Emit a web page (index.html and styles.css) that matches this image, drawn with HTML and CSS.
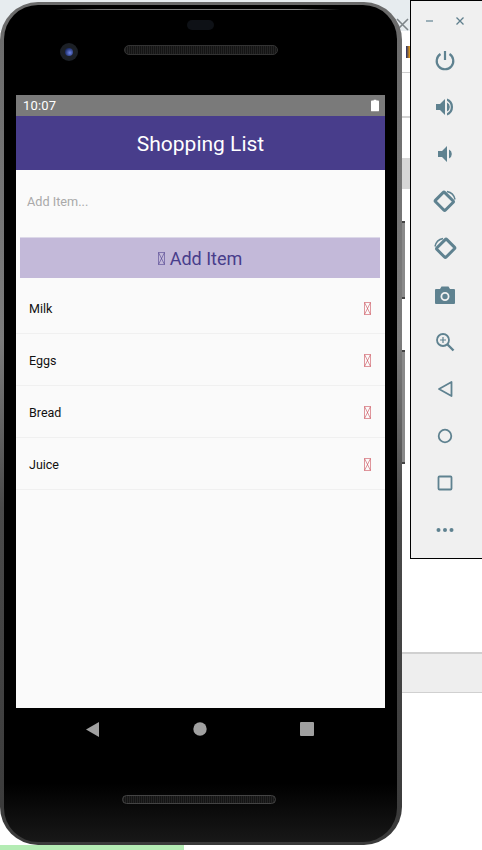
FILE: index.html
```html
<!DOCTYPE html>
<html lang="en">
<head>
<meta charset="utf-8">
<title>Shopping List</title>
<link rel="stylesheet" href="styles.css">
</head>
<body>
<div class="desk">
  <div class="bg-top"></div>
  <div class="bg-line1"></div>
  <div class="bg-line2"></div>
  <div class="bg-grey"></div>
  <div class="bg-band"></div>
  <div class="bg-green"></div>
  <svg class="bg-x" width="14" height="14" viewBox="0 0 14 14"><path d="M1 1l11 11M12 1L1 12" stroke="#7d8488" stroke-width="1.6" fill="none"/></svg>
  <div class="bg-v"></div>

  <div class="side-btn side-btn-1"></div>
  <div class="side-btn side-btn-2"></div>

  <div class="phone">
    <div class="phone-inner"></div>
    <div class="top-glare"></div>
    <div class="sensor"></div>
    <div class="camera"><div class="lens"></div></div>
    <div class="speaker speaker-top"></div>
    <div class="speaker speaker-bottom"></div>

    <main class="screen">
      <div class="status">
        <span class="time">10:07</span>
        <svg class="battery" width="8" height="13" viewBox="0 0 9 13"><path d="M3 0h3v1h2a1 1 0 0 1 1 1v10a1 1 0 0 1-1 1H1a1 1 0 0 1-1-1V2a1 1 0 0 1 1-1h2z" fill="#fff"/></svg>
      </div>
      <header class="appbar">Shopping List</header>
      <div class="input-row"><span class="placeholder">Add Item...</span></div>
      <button class="add-btn">
        <svg class="tofu" width="7" height="13" viewBox="0 0 7 13"><path d="M.5.5h6v12h-6zM.5.5l6 12M6.5.5l-6 12" fill="none" stroke="#483d8b" stroke-width="1" opacity=".55"/></svg>
        <span>Add Item</span>
      </button>
      <ul class="list">
        <li class="row"><span>Milk</span><svg class="tofu-red" width="7" height="13" viewBox="0 0 7 13"><path d="M.5.5h6v12h-6zM.5.5l6 12M6.5.5l-6 12" fill="none" stroke="#c9444f" stroke-width="1" opacity=".55"/></svg></li>
        <li class="row"><span>Eggs</span><svg class="tofu-red" width="7" height="13" viewBox="0 0 7 13"><path d="M.5.5h6v12h-6zM.5.5l6 12M6.5.5l-6 12" fill="none" stroke="#c9444f" stroke-width="1" opacity=".55"/></svg></li>
        <li class="row"><span>Bread</span><svg class="tofu-red" width="7" height="13" viewBox="0 0 7 13"><path d="M.5.5h6v12h-6zM.5.5l6 12M6.5.5l-6 12" fill="none" stroke="#c9444f" stroke-width="1" opacity=".55"/></svg></li>
        <li class="row"><span>Juice</span><svg class="tofu-red" width="7" height="13" viewBox="0 0 7 13"><path d="M.5.5h6v12h-6zM.5.5l6 12M6.5.5l-6 12" fill="none" stroke="#c9444f" stroke-width="1" opacity=".55"/></svg></li>
      </ul>
    </main>

    <nav class="softkeys">
      <svg width="14" height="16" viewBox="0 0 14 16"><path d="M0 8.500L13 1v15z" fill="#a0a0a0"/></svg>
      <svg width="14" height="14" viewBox="0 0 14 14"><circle cx="7" cy="7" r="6.700" fill="#a0a0a0"/></svg>
      <svg width="14" height="14" viewBox="0 0 14 14"><rect width="14" height="14" rx="1" fill="#a0a0a0"/></svg>
    </nav>
  </div>

  <aside class="panel">
    <div class="win-ctrls">
      <svg width="10" height="10" viewBox="0 0 10 10"><path d="M1 5h7" stroke="#7f9aa6" stroke-width="1.500"/></svg>
      <svg width="10" height="10" viewBox="0 0 10 10"><path d="M1.500 1.500l7 7M8.500 1.500l-7 7" stroke="#5f7f8d" stroke-width="1.300"/></svg>
    </div>
    <div class="tools">
      <svg width="24" height="24" viewBox="0 0 24 24"><path d="M12 3v9" stroke="#5f8290" stroke-width="2.200" fill="none"/><path d="M7.500 6a8.300 8.300 0 1 0 9 0" stroke="#5f8290" stroke-width="2.200" fill="none"/></svg>
      <svg width="24" height="24" viewBox="0 0 24 24"><path d="M3 9v6h4l5 5V4L7 9zM14 7.500v9a5 5 0 0 0 0-9zM14 3.500v2.300a7 7 0 0 1 0 12.400v2.300a9 9 0 0 0 0-17z" fill="#5f8290"/></svg>
      <svg width="24" height="24" viewBox="0 0 24 24"><path d="M5 9v6h4l5 5V4L9 9zM16 7.500v9a5 5 0 0 0 0-9z" fill="#5f8290"/></svg>
      <svg width="24" height="24" viewBox="0 0 24 24"><g fill="none" stroke="#5f8290"><rect x="5.500" y="6" width="13" height="14" rx="1.200" stroke-width="3" transform="rotate(-45 12 13) translate(0 -1)"/><path d="M14 2.500a10 10 0 0 1 8 8" stroke-width="1.500"/></g></svg>
      <svg width="24" height="24" viewBox="0 0 24 24"><g fill="none" stroke="#5f8290"><rect x="5.500" y="6" width="13" height="14" rx="1.200" stroke-width="3" transform="rotate(45 12 13) translate(0 -1)"/><path d="M10 2.500a10 10 0 0 0-8 8" stroke-width="1.500"/></g></svg>
      <svg width="24" height="24" viewBox="0 0 24 24"><path d="M8.500 3.500h7L17 6h4a1 1 0 0 1 1 1v13a1 1 0 0 1-1 1H3a1 1 0 0 1-1-1V7a1 1 0 0 1 1-1h4z" fill="#5f8290"/><circle cx="12" cy="13.500" r="3.600" fill="none" stroke="#f0f0f0" stroke-width="1.800"/></svg>
      <svg width="24" height="24" viewBox="0 0 24 24"><circle cx="10" cy="10" r="6" fill="none" stroke="#5f8290" stroke-width="1.800"/><path d="M10 7v6M7 10h6" stroke="#5f8290" stroke-width="1.200"/><path d="M14.500 14.500l6 6" stroke="#5f8290" stroke-width="2.400"/></svg>
      <svg width="24" height="24" viewBox="0 0 24 24"><path d="M18.500 5v14L6 12z" fill="none" stroke="#5f8290" stroke-width="1.800" stroke-linejoin="round"/></svg>
      <svg width="24" height="24" viewBox="0 0 24 24"><circle cx="12" cy="12" r="6.300" fill="none" stroke="#5f8290" stroke-width="1.800"/></svg>
      <svg width="24" height="24" viewBox="0 0 24 24"><rect x="5.500" y="5.500" width="13" height="13" rx="1" fill="none" stroke="#5f8290" stroke-width="1.800"/></svg>
      <svg width="24" height="24" viewBox="0 0 24 24"><g fill="#5f8290"><circle cx="5.500" cy="12" r="2"/><circle cx="12" cy="12" r="2"/><circle cx="18.500" cy="12" r="2"/></g></svg>
    </div>
  </aside>
</div>
</body>
</html>
```

FILE: styles.css
```css
* { box-sizing: border-box; }
html, body { margin: 0; padding: 0; }
body { width: 482px; height: 850px; overflow: hidden; background: #fff; font-family: Roboto, "Noto Sans", sans-serif; }
.desk { position: relative; width: 482px; height: 850px; overflow: hidden; background: #fff; }

.bg-top { position: absolute; left: 0; top: 0; width: 412px; height: 31px; background: #e7ecef; }
.bg-line1 { position: absolute; left: 395px; top: 72px; width: 16px; height: 1px; background: #cfcfcf; }
.bg-line2 { position: absolute; left: 395px; top: 116px; width: 16px; height: 2px; background: #d2d2d2; }
.bg-grey { position: absolute; left: 395px; top: 158px; width: 16px; height: 31px; background: #d6d6d6; }
.bg-band { position: absolute; left: 395px; top: 652px; width: 87px; height: 41px; background: #eee; border-top: 2px solid #d0d0d0; border-bottom: 1px solid #d0d0d0; }
.bg-green { position: absolute; left: 0; top: 845px; width: 184px; height: 5px; background: #b4ecb4; }
.bg-x { position: absolute; left: 396px; top: 18px; }
.bg-v { position: absolute; left: 406px; top: 46px; width: 4px; height: 12px; background: linear-gradient(90deg, #1d2a70, #f0a010); }

.side-btn { position: absolute; left: 402px; width: 3px; background: #8a8a8a; border-top: 2px solid #444; border-bottom: 2px solid #444; }
.side-btn-1 { top: 221px; height: 78px; }
.side-btn-2 { top: 350px; height: 114px; }

.phone { position: absolute; left: 0; top: 2px; width: 402px; height: 843px; border-radius: 38px; background: linear-gradient(180deg, #6a6a6a 0, #7c7c7c 40%, #4a4a4a 60%, #3a3a3a 100%); }
.phone-inner { position: absolute; left: 4px; top: 3px; right: 5px; bottom: 3px; border-radius: 34px; background: linear-gradient(180deg, #000 0, #000 93%, #181818 100%); }
.top-glare { position: absolute; left: 55px; top: 7px; width: 285px; height: 1px; background: linear-gradient(90deg, #000, #777 15%, #888 85%, #000); }
.sensor { position: absolute; left: 187px; top: 18px; width: 27px; height: 10px; border-radius: 5px; background: #0e1116; }
.camera { position: absolute; left: 60px; top: 41px; width: 18px; height: 18px; border-radius: 50%; background: #1c2026; display: flex; align-items: center; justify-content: center; }
.lens { width: 8px; height: 8px; border-radius: 50%; background: radial-gradient(circle at 60% 60%, #6f86e8, #1a2a66 70%); }
.speaker { position: absolute; left: 124px; width: 154px; height: 10px; border-radius: 5px; background: repeating-linear-gradient(90deg, #242424 0, #242424 1px, #141414 1px, #141414 2px); border: 1px solid #333; }
.speaker-top { top: 43px; }
.speaker-bottom { left: 122px; top: 793px; height: 9px; border-color: #444; }

.screen { position: absolute; left: 16px; top: 93px; width: 369px; height: 613px; background: #fafafa; display: flex; flex-direction: column; }
.status { height: 21px; background: #7a7a7a; display: flex; align-items: center; justify-content: space-between; padding: 0 6px 0 7px; color: #fff; font-size: 13px; flex: none; }
.time { letter-spacing: .2px; }
.appbar { height: 54px; flex: none; background: #483d8b; color: #fff; font-size: 21px; padding-top: 2px; display: flex; align-items: center; justify-content: center; }
.input-row { height: 67px; flex: none; padding: 24px 0 0 11px; font-size: 12.700px; line-height: 15px; }
.placeholder { color: #a9a9a9; }
.add-btn { flex: none; margin: 0 4px 0 4px; width: 360px; height: 41px; padding: 1px 0 0; border: 0; border-top: 1px solid #dcd8e8; background: #c3b9d9; color: #483d8b; font: 18px Roboto, sans-serif; display: flex; align-items: center; justify-content: center; gap: 5px; }
.list { list-style: none; margin: 4px 0 0; padding: 0; }
.row { height: 52px; padding: 1px 14px 0 13px; border-bottom: 1px solid #f0f0f0; display: flex; align-items: center; justify-content: space-between; font-size: 12.500px; color: #111; }

.softkeys { position: absolute; left: 86px; top: 719px; width: 228px; display: flex; justify-content: space-between; align-items: center; }

.panel { position: absolute; left: 410px; top: 0; width: 72px; height: 559px; background: #f0f0f0; border: 1px solid #000; border-right: 0; padding-top: 15px; }
.win-ctrls { display: flex; justify-content: center; gap: 20px; padding-right: 3px; height: 10px; }
.tools { margin-top: 22px; display: flex; flex-direction: column; align-items: center; gap: 23px; padding-right: 3px; }
```
